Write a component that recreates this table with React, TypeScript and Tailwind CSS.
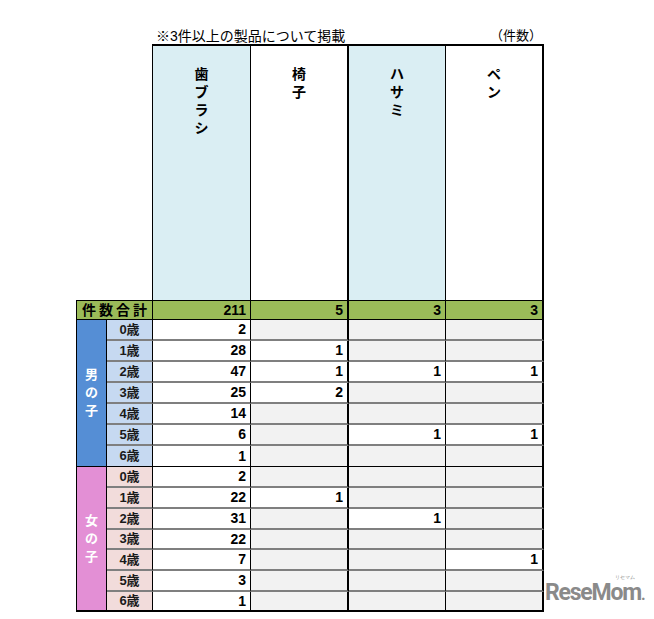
import React from 'react'

// Products counted in the survey (only items with 3+ reports)
const products = [
  { name: '歯ブラシ', total: 211, tint: true },
  { name: '椅子', total: 5, tint: false },
  { name: 'ハサミ', total: 3, tint: true },
  { name: 'ペン', total: 3, tint: false },
]

type Cell = number | null

const boys: Cell[][] = [
  [2, null, null, null],
  [28, 1, null, null],
  [47, 1, 1, 1],
  [25, 2, null, null],
  [14, null, null, null],
  [6, null, 1, 1],
  [1, null, null, null],
]

const girls: Cell[][] = [
  [2, null, null, null],
  [22, 1, null, null],
  [31, null, 1, null],
  [22, null, null, null],
  [7, null, null, 1],
  [3, null, null, null],
  [1, null, null, null],
]

// column widths and right borders (thin / thick black lines)
const colClass = [
  'w-[98px] border-r border-r-black',
  'w-[98px] border-r-2 border-r-black',
  'w-[97px] border-r border-r-black',
  'w-[98px] border-r-2 border-r-black',
]

const boyHeights = ['h-[21px]', 'h-[21px]', 'h-[21px]', 'h-[21px]', 'h-[21px]', 'h-[21px]', 'h-[21px]']
const girlHeights = ['h-[21px]', 'h-[21px]', 'h-[21px]', 'h-[20px]', 'h-[21px]', 'h-[21px]', 'h-[20px]']

function Group({
  label,
  rows,
  heights,
  sideColor,
  ageColor,
  last,
}: {
  label: string
  rows: Cell[][]
  heights: string[]
  sideColor: string
  ageColor: string
  last?: boolean
}) {
  return (
    <div className="flex w-fit">
      {/* gender column */}
      <div
        className={`w-[31px] ${sideColor} border-l border-r border-black ${
          last ? 'border-b-2' : 'border-b'
        } flex flex-col items-center justify-center text-white font-bold text-[13px] leading-[18px]`}
      >
        {label.split('').map((ch, i) => (
          <span key={i}>{ch}</span>
        ))}
      </div>

      <div className="flex flex-col">
        {rows.map((row, i) => {
          const isLast = i === rows.length - 1
          const bottom = isLast
            ? last
              ? 'border-b-2 border-b-black'
              : 'border-b border-b-black'
            : 'border-b-2 border-b-[#7f7f7f]'
          return (
            <div key={i} className={`flex ${heights[i]}`}>
              <div
                className={`w-[46px] ${ageColor} ${bottom} border-r border-r-black flex items-center justify-center font-bold text-[13px] text-[#1a1a1a]`}
              >
                {i}歳
              </div>
              {row.map((v, j) => (
                <div
                  key={j}
                  className={`${colClass[j]} ${bottom} ${
                    j === 0 || v !== null ? 'bg-white' : 'bg-[#f2f2f2]'
                  } flex items-center justify-end pr-[4px] font-bold text-[14px] text-black`}
                >
                  {v}
                </div>
              ))}
            </div>
          )
        })}
      </div>
    </div>
  )
}

export default function App() {
  return (
    <div className="relative w-[654px] h-[619px] overflow-hidden bg-white pt-[28px] pl-[76px] font-['Liberation_Sans','Noto_Sans_CJK_JP',sans-serif] text-black">
      {/* caption */}
      <div className="ml-[77px] w-[391px] h-[16px] flex items-end justify-between leading-[16px]">
        <span className="pl-[3px] text-[14px]">※3件以上の製品について掲載</span>
        <span className="pr-[2px] text-[13px]">（件数）</span>
      </div>

      {/* product headers */}
      <div className="flex h-[256px] w-fit">
        <div className="w-[77px] border-r border-r-black" />
        {products.map((p, i) => (
          <div
            key={p.name}
            className={`${colClass[i]} border-t-2 border-t-black ${
              p.tint ? 'bg-[#daeef3]' : 'bg-white'
            } flex flex-col items-center pt-[19px] font-bold text-[14px] leading-[18px]`}
          >
            {p.name.split('').map((ch, k) => (
              <span key={k}>{ch}</span>
            ))}
          </div>
        ))}
      </div>

      {/* totals */}
      <div className="flex h-[20px] w-fit bg-[#9bbb59] border-t border-t-black">
        <div className="w-[77px] border-l border-l-black border-r border-r-black border-b border-b-black flex items-center justify-center font-bold text-[14px] tracking-[3px] pl-[3px]">
          件数合計
        </div>
        {products.map((p, i) => (
          <div
            key={p.name}
            className={`${colClass[i]} border-b border-b-black flex items-center justify-end pr-[4px] font-bold text-[14px]`}
          >
            {p.total}
          </div>
        ))}
      </div>

      <Group label="男の子" rows={boys} heights={boyHeights} sideColor="bg-[#558ed5]" ageColor="bg-[#c6d9f1]" />
      <Group label="女の子" rows={girls} heights={girlHeights} sideColor="bg-[#e38fd5]" ageColor="bg-[#f2dcdb]" last />

      {/* watermark */}
      <div className="absolute left-[545px] top-[581px] whitespace-nowrap text-[#8a8a8a] font-['Roboto',sans-serif] font-bold text-[23px] leading-[24px] tracking-[-1.2px]">
        ReseMom<span className="text-[16px]">.</span>
        <span className="absolute right-[10px] top-[-6px] text-[5px] leading-[5px] tracking-normal font-normal">リセマム</span>
      </div>
    </div>
  )
}
